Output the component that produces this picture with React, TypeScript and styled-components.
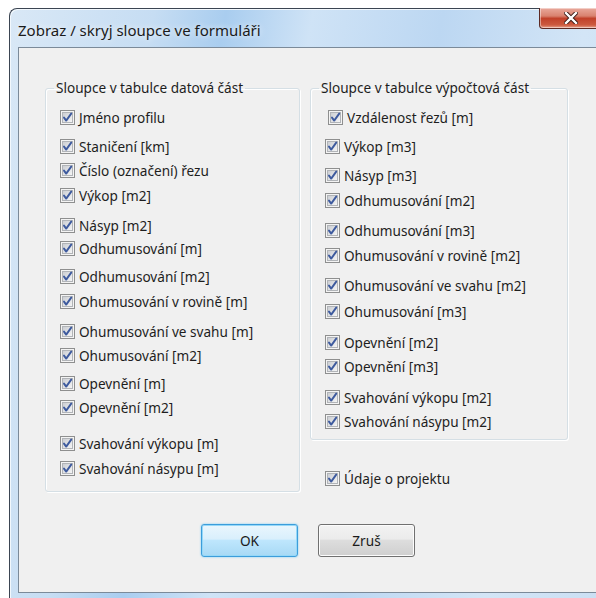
import React from 'react';
import styled, { createGlobalStyle } from 'styled-components';

const GlobalStyle = createGlobalStyle`
  html, body {
    margin: 0;
    padding: 0;
    background: #ffffff;
    overflow: hidden;
  }
  body {
    font-family: "Noto Sans", "Open Sans", sans-serif;
    font-size: 13.6px;
    color: #1e1e1e;
  }
`;

interface ColumnItem {
  label: string;
  gap: number;
  indent?: number;
}

// gap = space above the row, the dialog spaces its rows unevenly
const dataColumns: ColumnItem[] = [
  { label: 'Jméno profilu', gap: 0 },
  { label: 'Staničení [km]', gap: 11 },
  { label: 'Číslo (označení) řezu', gap: 6 },
  { label: 'Výkop [m2]', gap: 7 },
  { label: 'Násyp [m2]', gap: 12 },
  { label: 'Odhumusování [m]', gap: 5 },
  { label: 'Odhumusování [m2]', gap: 10 },
  { label: 'Ohumusování v rovině [m]', gap: 7 },
  { label: 'Ohumusování ve svahu [m]', gap: 12 },
  { label: 'Ohumusování [m2]', gap: 6 },
  { label: 'Opevnění [m]', gap: 10 },
  { label: 'Opevnění [m2]', gap: 6 },
  { label: 'Svahování výkopu [m]', gap: 18 },
  { label: 'Svahování násypu [m]', gap: 7 },
];

const calcColumns: ColumnItem[] = [
  { label: 'Vzdálenost řezů [m]', gap: 0, indent: 3 },
  { label: 'Výkop [m3]', gap: 11 },
  { label: 'Násyp [m3]', gap: 11 },
  { label: 'Odhumusování [m2]', gap: 7 },
  { label: 'Odhumusování [m3]', gap: 12 },
  { label: 'Ohumusování v rovině [m2]', gap: 7 },
  { label: 'Ohumusování ve svahu [m2]', gap: 12 },
  { label: 'Ohumusování [m3]', gap: 8 },
  { label: 'Opevnění [m2]', gap: 13 },
  { label: 'Opevnění [m3]', gap: 6 },
  { label: 'Svahování výkopu [m2]', gap: 13 },
  { label: 'Svahování násypu [m2]', gap: 6 },
];

const Page = styled.div`
  padding: 8px 0 0 9px;
  width: 620px;
`;

const Window = styled.div`
  border-left: 1px solid #3b4552;
  border-top: 1px solid #3b4552;
  border-top-left-radius: 8px;
  background: linear-gradient(
    100deg,
    #d9e8f6 0%,
    #c6ddf3 20%,
    #a9cdef 30%,
    #cfe3f6 42%,
    #bcd7f2 60%,
    #d3e5f6 80%,
    #c9def3 100%
  );
  padding: 0 0 5px 8px;
  box-shadow: inset 1px 1px 0 #f2f8fd;
`;

const TitleBar = styled.div`
  height: 38px;
  display: flex;
  align-items: flex-start;
`;

const Title = styled.div`
  flex: 0 0 521px;
  padding: 11px 0 0 0;
  font-size: 15px;
  color: #1b1b1b;
  text-shadow: 0 0 6px #ffffff;
`;

const CloseButton = styled.div`
  width: 62px;
  height: 20px;
  margin-top: -1px;
  border: 1px solid #5d2a24;
  border-top: none;
  border-radius: 0 0 4px 4px;
  background: linear-gradient(
    180deg,
    #e9a99c 0%,
    #d9826f 40%,
    #c1412a 52%,
    #cc5a3f 85%,
    #e8a48f 100%
  );
  box-shadow: inset 0 0 0 1px rgba(255, 255, 255, 0.45);
  display: flex;
  align-items: center;
  justify-content: center;
`;

const Client = styled.div`
  height: 546px;
  background: #f0f0f0;
  border: 1px solid #7b8a99;
  border-right: none;
  box-sizing: border-box;
  padding: 31px 0 0 26px;
`;

const Columns = styled.div`
  display: flex;
  align-items: flex-start;
  gap: 10px;
`;

const Column = styled.div`
  display: flex;
  flex-direction: column;
`;

const Group = styled.fieldset<{ $width: number; $bottom: number }>`
  width: ${p => p.$width}px;
  box-sizing: border-box;
  margin: 0;
  padding: 11px 0 ${p => p.$bottom}px 14px;
  border: 1px solid #d5dfe5;
  border-radius: 3px;
  box-shadow: 1px 1px 0 #ffffff, inset 1px 1px 0 #ffffff;
  display: flex;
  flex-direction: column;
`;

const Legend = styled.legend`
  padding: 0 2px;
  margin-left: -6px;
  line-height: 18px;
`;

const Row = styled.label<{ $gap: number; $indent: number }>`
  display: flex;
  align-items: center;
  gap: 4px;
  height: 18px;
  margin-top: ${p => p.$gap}px;
  margin-left: ${p => p.$indent}px;
  white-space: nowrap;
`;

const Buttons = styled.div`
  display: flex;
  gap: 20px;
  margin: 32px 0 0 156px;
`;

const DialogButton = styled.button<{ $default?: boolean }>`
  width: 97px;
  height: 33px;
  font-family: inherit;
  font-size: 13.6px;
  color: #1b1b1b;
  border-radius: 3px;
  border: 1px solid ${p => (p.$default ? '#3c9ddb' : '#707070')};
  background: ${p =>
    p.$default
      ? 'linear-gradient(180deg, #eaf6fd 0%, #d9effc 45%, #bee6fd 50%, #a7d9f5 100%)'
      : 'linear-gradient(180deg, #f2f2f2 0%, #ebebeb 45%, #dddddd 50%, #cfcfcf 100%)'};
  box-shadow: ${p =>
    p.$default ? 'inset 0 0 0 1px #95d8f8, 0 0 2px #68c8f5' : 'inset 0 0 0 1px #fcfcfc'};
  padding: 0;
`;

const CheckBox: React.FC = () => (
  <svg width="15" height="15" viewBox="0 0 15 15">
    <defs>
      <linearGradient id="boxFill" x1="0" y1="0" x2="1" y2="1">
        <stop offset="0" stopColor="#c9ccd1" />
        <stop offset="1" stopColor="#f7f7f7" />
      </linearGradient>
    </defs>
    <rect x="0.5" y="0.5" width="14" height="14" fill="#f4f4f4" stroke="#8e8f8f" />
    <rect x="2.5" y="2.5" width="10" height="10" fill="url(#boxFill)" stroke="#b1b4b8" />
    <path
      d="M4 7.6 L6.2 10.6 L11.2 3.6"
      fill="none"
      stroke="#3d5a9e"
      strokeWidth="1.9"
      strokeLinecap="round"
      strokeLinejoin="round"
    />
  </svg>
);

const CloseGlyph: React.FC = () => (
  <svg width="14" height="12" viewBox="0 0 14 12">
    <path
      d="M2 1 L12 11 M12 1 L2 11"
      stroke="#3a1a15"
      strokeWidth="4.2"
      strokeLinecap="square"
    />
    <path d="M2 1 L12 11 M12 1 L2 11" stroke="#ffffff" strokeWidth="2.4" strokeLinecap="square" />
  </svg>
);

const App: React.FC = () => (
  <>
    <GlobalStyle />
    <Page>
      <Window>
        <TitleBar>
          <Title>Zobraz / skryj sloupce ve formuláři</Title>
          <CloseButton>
            <CloseGlyph />
          </CloseButton>
        </TitleBar>
        <Client>
          <Columns>
            <Group $width={255} $bottom={14}>
              <Legend>Sloupce v tabulce datová část</Legend>
              {dataColumns.map(item => (
                <Row key={item.label} $gap={item.gap} $indent={item.indent ?? 0}>
                  <CheckBox />
                  {item.label}
                </Row>
              ))}
            </Group>
            <Column>
              <Group $width={258} $bottom={9}>
                <Legend>Sloupce v tabulce výpočtová část</Legend>
                {calcColumns.map(item => (
                  <Row key={item.label} $gap={item.gap} $indent={item.indent ?? 0}>
                    <CheckBox />
                    {item.label}
                  </Row>
                ))}
              </Group>
              <Row $gap={29} $indent={15}>
                <CheckBox />
                Údaje o projektu
              </Row>
            </Column>
          </Columns>
          <Buttons>
            <DialogButton $default>OK</DialogButton>
            <DialogButton>Zruš</DialogButton>
          </Buttons>
        </Client>
      </Window>
    </Page>
  </>
);

export default App;
